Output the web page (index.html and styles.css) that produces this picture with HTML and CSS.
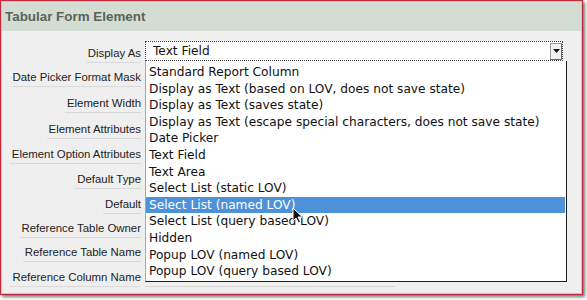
FILE: index.html
```html
<!DOCTYPE html>
<html>
<head>
<meta charset="utf-8">
<link rel="stylesheet" href="styles.css">
</head>
<body>
<div class="panel">
  <div class="header">Tabular Form Element</div>
  <div class="form">
    <div class="row r1">
      <div class="label"><span>Display As</span></div>
      <div class="field">
        <div class="select">
          <span class="sel-text">Text Field</span>
          <span class="arrow"><svg width="7" height="4" viewBox="0 0 7 4"><path d="M0 0h7L3.5 4z" fill="#111"/></svg></span>
          <ul class="list">
            <li>Standard Report Column</li>
            <li>Display as Text (based on LOV, does not save state)</li>
            <li>Display as Text (saves state)</li>
            <li>Display as Text (escape special characters, does not save state)</li>
            <li>Date Picker</li>
            <li>Text Field</li>
            <li>Text Area</li>
            <li>Select List (static LOV)</li>
            <li class="active">Select List (named LOV)</li>
            <li>Select List (query based LOV)</li>
            <li>Hidden</li>
            <li>Popup LOV (named LOV)</li>
            <li>Popup LOV (query based LOV)</li>
          </ul>
        </div>
      </div>
    </div>
    <div class="row"><div class="label"><span>Date Picker Format Mask</span></div><div class="field"></div></div>
    <div class="row r3"><div class="label"><span>Element Width</span></div><div class="field"></div></div>
    <div class="row r4"><div class="label"><span>Element Attributes</span></div><div class="field"></div></div>
    <div class="row"><div class="label"><span>Element Option Attributes</span></div><div class="field"></div></div>
    <div class="row"><div class="label"><span>Default Type</span></div><div class="field"></div></div>
    <div class="row"><div class="label"><span>Default</span></div><div class="field"></div></div>
    <div class="row r8"><div class="label"><span>Reference Table Owner</span></div><div class="field"></div></div>
    <div class="row r9"><div class="label"><span>Reference Table Name</span></div><div class="field"></div></div>
    <div class="row"><div class="label"><span>Reference Column Name</span></div><div class="field"><span class="field-line"></span></div></div>
  </div>
</div>
<svg class="cursor" width="12" height="17" viewBox="0 0 12 17"><path d="M1 1v13l3-3 2.5 5 2-1-2.5-5h4.5z" fill="#111" stroke="#fff" stroke-width="1"/></svg>
</body>
</html>
```
FILE: styles.css
```css
html, body {
  margin: 0;
  padding: 0;
  background: #ffffff;
}
body {
  width: 587px;
  height: 300px;
  position: relative;
  overflow: hidden;
}
.panel {
  box-sizing: border-box;
  width: 583px;
  height: 295px;
  border: 1px solid #c22a3c;
  padding: 1px;
  background: #f6f6f6;
  box-shadow: inset 0 0 0 1px #eab4bb, 2px 2px 3px rgba(0,0,0,0.55);
}
.header {
  height: 29px;
  line-height: 29px;
  background: #d4ddd3;
  color: #596459;
  font-family: "Liberation Sans", Arial, sans-serif;
  font-weight: bold;
  font-size: 13.4px;
  padding-left: 3px;
}
.form {
  background: #efefef;
  height: 262px;
  padding-top: 10px;
  box-sizing: border-box;
}
.row {
  display: flex;
  height: 25px;
  align-items: center;
}
.r1 .label { padding-top: 2px; }
.r3 { height: 28px; }
.r4 { height: 24px; }
.r8, .r9 { height: 24px; }
.label {
  width: 139px;
  text-align: right;
  font-family: "Liberation Sans", Arial, sans-serif;
  font-size: 11.4px;
  color: #222;
  margin-right: 4px;
}
.label span {
  display: inline-block;
  line-height: 13px;
  padding: 0 0 2px 2px;
  border-bottom: 1px solid #d9d9d9;
}
.field {
  flex: 1;
  position: relative;
  align-self: stretch;
  display: flex;
  align-items: flex-start;
}
.field-line {
  position: absolute;
  left: 0;
  bottom: 4px;
  width: 250px;
  border-bottom: 1px solid #d6d6d6;
}
.select {
  position: relative;
  box-sizing: border-box;
  width: 418px;
  height: 20px;
  background: #fff;
  border: 1px dotted #444;
  font-family: "DejaVu Sans", sans-serif;
  font-size: 12.2px;
  color: #111;
  display: flex;
  align-items: center;
}
.sel-text {
  flex: 1;
  padding-left: 7px;
}
.arrow {
  box-sizing: border-box;
  width: 12px;
  height: 17px;
  border: 1px solid #9a9a9a;
  border-right-color: #6a6a6a;
  border-bottom-color: #6a6a6a;
  background: #f2f2f2;
  display: flex;
  align-items: center;
  justify-content: center;
}
.list {
  position: absolute;
  left: -1px;
  top: 19px;
  box-sizing: border-box;
  width: 422px;
  height: 221px;
  margin: 0;
  padding: 3px 1px 0 0;
  list-style: none;
  background: #fff;
  border: 1px solid #a8a8a8;
  border-right-color: #1e1e1e;
  border-bottom-color: #1e1e1e;
  border-top: none;
  font-family: "DejaVu Sans", sans-serif;
  font-size: 12.2px;
  color: #111;
}
.list li {
  height: 16.6px;
  line-height: 16.6px;
  padding-left: 3px;
  white-space: nowrap;
}
.list li.active {
  background: #4d91d8;
  color: #fff;
}
.cursor {
  position: absolute;
  left: 292px;
  top: 207px;
}
```
